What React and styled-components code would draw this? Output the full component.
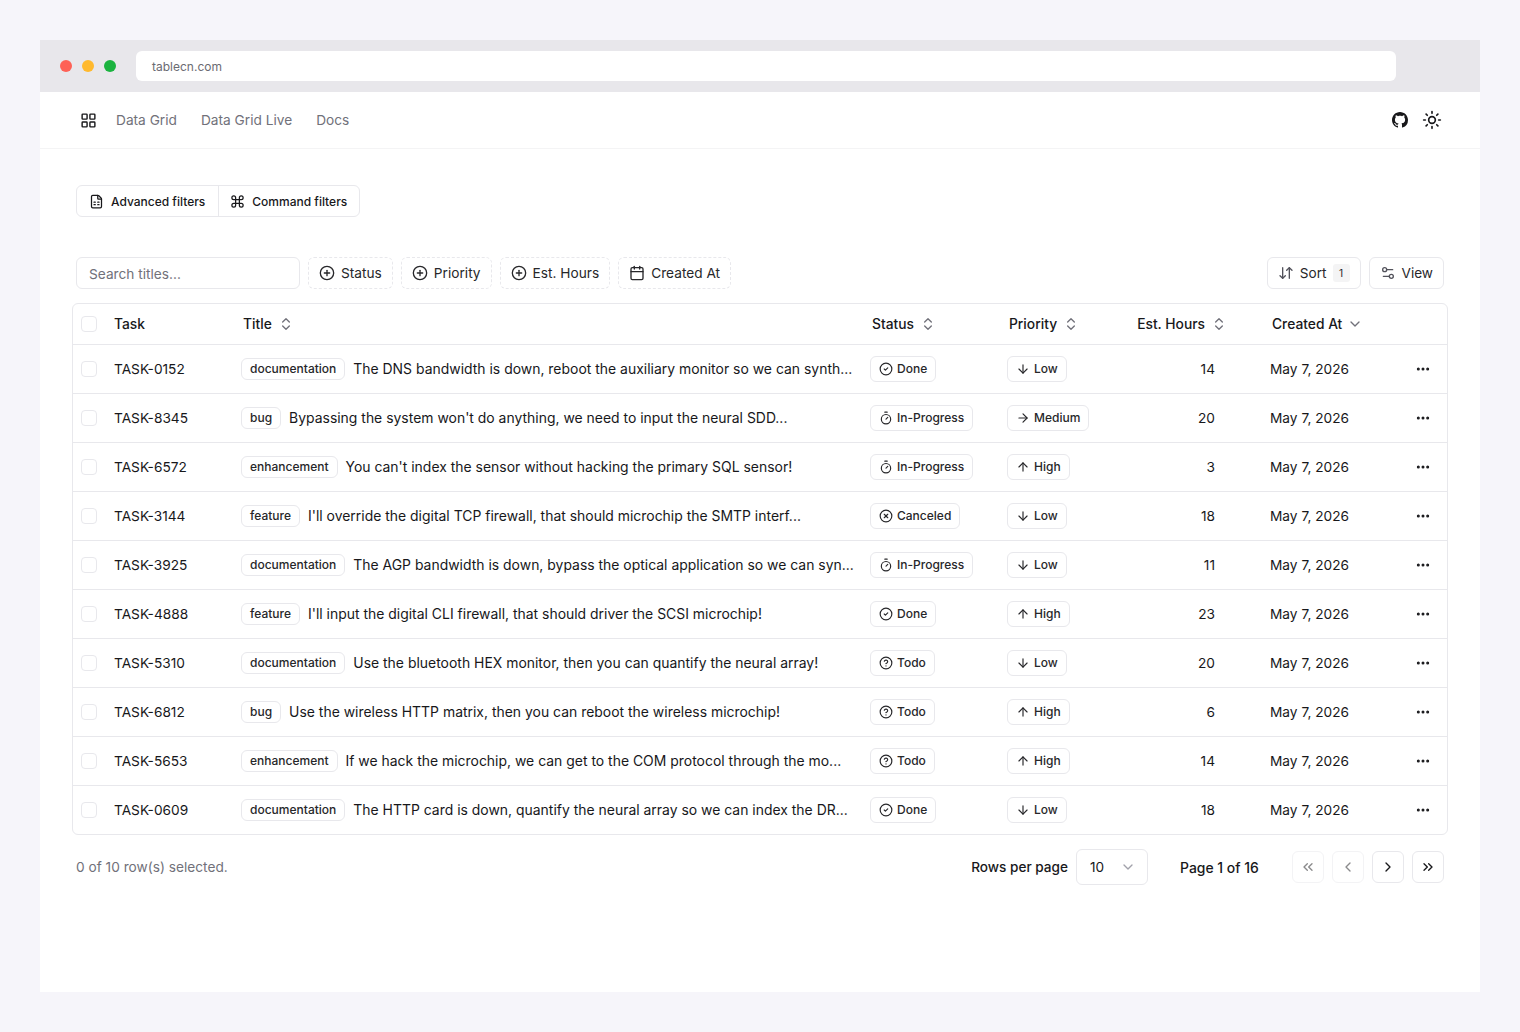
import React from 'react'
import styled, { createGlobalStyle } from 'styled-components'
import {
  ArrowDown, ArrowDownUp, ArrowRight, ArrowUp, Calendar, ChevronDown, ChevronLeft, ChevronRight,
  ChevronsLeft, ChevronsRight, ChevronsUpDown, CircleCheck, CircleHelp, CirclePlus, CircleX, Command,
  Ellipsis, FileSpreadsheet, LayoutGrid, Settings2, Sun, Timer,
} from 'lucide-react'
import { BsGithub } from 'react-icons/bs'

const line = '#e8e8ec'

const Global = createGlobalStyle`
  html, body { margin: 0; padding: 0; background: #f6f5fa; }
  body { font-family: Inter, "Liberation Sans", sans-serif; font-size: 13.7px; color: #18181b; -webkit-font-smoothing: antialiased; }
  * { box-sizing: border-box; }
`

const Page = styled.div`
  height: 1032px;
  padding: 40px;
  overflow: hidden;
`

const Browser = styled.div`
  height: 952px;
  background: #fff;
  display: flex;
  flex-direction: column;
`

const TitleBar = styled.div`
  height: 52px;
  background: #e8e7eb;
  display: flex;
  align-items: center;
  padding: 0 84px 0 20px;
`

const Dot = styled.span`
  width: 12px;
  height: 12px;
  border-radius: 50%;
  margin-right: 10px;
  background: ${p => p.$color};
`

const UrlBar = styled.div`
  flex: 1;
  height: 30px;
  margin-left: 10px;
  padding-left: 16px;
  background: #fff;
  border-radius: 6px;
  display: flex;
  align-items: center;
  font-size: 12px;
  color: #6b6b72;
`

const Nav = styled.nav`
  height: 57px;
  flex: none;
  padding: 0 32px 0 39.5px;
  display: flex;
  align-items: center;
  gap: 24px;
  border-bottom: 1px solid #f4f4f5;
`

const Logo = styled.span`
  display: flex;
  margin-right: -4.5px;
`

const NavLink = styled.a`
  color: #71717a;
  font-size: 13.7px;
`

const NavIcons = styled.div`
  margin-left: auto;
  display: flex;
`

const IconButton = styled.span`
  width: 32px;
  height: 32px;
  display: flex;
  align-items: center;
  justify-content: center;
  color: #18181b;
`

const Content = styled.main`
  padding: 36px 36px 0;
`

const ModeGroup = styled.div`
  display: inline-flex;
  height: 32px;
  border: 1px solid ${line};
  border-radius: 6px;
  vertical-align: top;
`

const ModeButton = styled.div`
  display: flex;
  align-items: center;
  gap: 7px;
  padding: 0 ${p => p.$last ? 12 : 13}px 0 ${p => p.$last ? 11 : 12}px;
  font-size: 12px;
  font-weight: 500;
  & + & { border-left: 1px solid ${line}; }
`

const Toolbar = styled.div`
  margin-top: 40px;
  display: flex;
  gap: 8px;
`

const Search = styled.div`
  width: 224px;
  height: 32px;
  padding: 1px 12px 0;
  display: flex;
  align-items: center;
  border: 1px solid ${line};
  border-radius: 6px;
  color: #71717a;
`

const FilterButton = styled.div`
  height: 32px;
  padding: 0 10px;
  display: flex;
  align-items: center;
  gap: 6px;
  border: 1px dashed ${line};
  border-radius: 6px;
  font-size: 13.7px;
  color: #27272a;
`

const ToolbarEnd = styled.div`
  margin-left: auto;
  display: flex;
  gap: 8px;
`

const OutlineButton = styled.div`
  height: 32px;
  padding: 0 10px;
  display: flex;
  align-items: center;
  gap: 6px;
  border: 1px solid ${line};
  border-radius: 6px;
  font-size: 13.6px;
  color: #27272a;
  svg { color: #52525b; }
`

const Count = styled.span`
  width: 17px;
  height: 18px;
  display: flex;
  align-items: center;
  justify-content: center;
  background: #f4f4f5;
  border-radius: 3px;
  font-size: 10px;
`

const Table = styled.div`
  margin: 14px -4px 0;
  border: 1px solid ${line};
  border-radius: 6px;
`

const Row = styled.div`
  height: ${p => p.$head ? 40 : 49}px;
  padding-left: 8px;
  display: grid;
  grid-template-columns: 33px 127px 629px 137px 140px 123px 142px 1fr;
  align-items: center;
  border-top: ${p => p.$head ? 'none' : `1px solid ${line}`};
  ${p => p.$head && 'font-weight: 500; font-size: 13.8px;'}
`

const Checkbox = styled.span`
  display: block;
  width: 16px;
  height: 16px;
  border: 1px solid ${line};
  border-radius: 4px;
`

const HeadCell = styled.div`
  display: flex;
  align-items: center;
  gap: ${p => p.$gap || 6}px;
  padding-left: 2px;
  svg { color: #71717a; }
`

const HoursHead = styled(HeadCell)`
  justify-content: flex-end;
  padding-right: 43px;
  margin-left: -20px;
`

const TitleCell = styled.div`
  display: flex;
  align-items: center;
  gap: 8px;
  white-space: nowrap;
  font-size: 13.95px;
`

const TitleText = styled.span`
  margin-bottom: 2px;
`

const Tag = styled.span`
  height: 22px;
  padding: 0 8px 1px;
  display: inline-flex;
  align-items: center;
  border: 1px solid ${line};
  border-radius: 6px;
  font-size: 12px;
  font-weight: 500;
  color: #27272a;
`

const Badge = styled.span`
  justify-self: start;
  height: 26px;
  padding: 0 8px 1px;
  display: inline-flex;
  align-items: center;
  gap: 4px;
  border: 1px solid ${line};
  border-radius: 6px;
  font-size: 12px;
  font-weight: 500;
  color: #27272a;
`

const Hours = styled.div`
  text-align: right;
  padding-right: 55px;
`

const RowMenu = styled.div`
  display: flex;
  padding-left: 3px;
`

const Footer = styled.div`
  margin-top: 14px;
  height: 36px;
  display: flex;
  align-items: center;
`

const Selected = styled.div`
  color: #71717a;
`

const Pager = styled.div`
  margin-left: auto;
  display: flex;
  align-items: center;
  font-weight: 500;
  font-size: 13.6px;
`

const PageLabel = styled.span`
  min-width: 80px;
  font-size: 13.95px;
`

const RowsSelect = styled.div`
  width: 72px;
  height: 36px;
  margin: 0 32px 0 8px;
  padding: 0 11px 0 13px;
  display: flex;
  align-items: center;
  justify-content: space-between;
  border: 1px solid ${line};
  border-radius: 6px;
  font-weight: 400;
  svg { color: #a1a1aa; }
`

const PageButtons = styled.div`
  margin-left: 32px;
  display: flex;
  gap: 8px;
`

const PageButton = styled.span`
  width: 32px;
  height: 32px;
  display: flex;
  align-items: center;
  justify-content: center;
  border: 1px solid ${line};
  border-radius: 6px;
  opacity: ${p => p.$disabled ? 0.5 : 1};
`

const statuses = {
  Done: CircleCheck,
  'In-Progress': Timer,
  Canceled: CircleX,
  Todo: CircleHelp,
}

const priorities = {
  Low: ArrowDown,
  Medium: ArrowRight,
  High: ArrowUp,
}

const tasks = [
  ['TASK-0152', 'documentation', 'The DNS bandwidth is down, reboot the auxiliary monitor so we can synth...', 'Done', 'Low', 14],
  ['TASK-8345', 'bug', "Bypassing the system won't do anything, we need to input the neural SDD...", 'In-Progress', 'Medium', 20],
  ['TASK-6572', 'enhancement', "You can't index the sensor without hacking the primary SQL sensor!", 'In-Progress', 'High', 3],
  ['TASK-3144', 'feature', "I'll override the digital TCP firewall, that should microchip the SMTP interf...", 'Canceled', 'Low', 18],
  ['TASK-3925', 'documentation', 'The AGP bandwidth is down, bypass the optical application so we can syn...', 'In-Progress', 'Low', 11],
  ['TASK-4888', 'feature', "I'll input the digital CLI firewall, that should driver the SCSI microchip!", 'Done', 'High', 23],
  ['TASK-5310', 'documentation', 'Use the bluetooth HEX monitor, then you can quantify the neural array!', 'Todo', 'Low', 20],
  ['TASK-6812', 'bug', 'Use the wireless HTTP matrix, then you can reboot the wireless microchip!', 'Todo', 'High', 6],
  ['TASK-5653', 'enhancement', 'If we hack the microchip, we can get to the COM protocol through the mo...', 'Todo', 'High', 14],
  ['TASK-0609', 'documentation', 'The HTTP card is down, quantify the neural array so we can index the DR...', 'Done', 'Low', 18],
]

function TaskRow({ id, tag, title, status, priority, hours }) {
  const StatusIcon = statuses[status]
  const PriorityIcon = priorities[priority]
  return (
    <Row>
      <Checkbox />
      <div>{id}</div>
      <TitleCell>
        <Tag>{tag}</Tag>
        <TitleText>{title}</TitleText>
      </TitleCell>
      <Badge><StatusIcon size={14} />{status}</Badge>
      <Badge><PriorityIcon size={14} />{priority}</Badge>
      <Hours>{hours}</Hours>
      <div>May 7, 2026</div>
      <RowMenu><Ellipsis size={16} strokeWidth={2.5} /></RowMenu>
    </Row>
  )
}

export default function App() {
  return (
    <Page>
      <Global />
      <Browser>
        <TitleBar>
          <Dot $color="#fe6156" />
          <Dot $color="#ffb92e" />
          <Dot $color="#1bb33f" />
          <UrlBar>tablecn.com</UrlBar>
        </TitleBar>
        <Nav>
          <Logo><LayoutGrid size={17} /></Logo>
          <NavLink>Data Grid</NavLink>
          <NavLink>Data Grid Live</NavLink>
          <NavLink>Docs</NavLink>
          <NavIcons>
            <IconButton><BsGithub size={16} /></IconButton>
            <IconButton><Sun size={20} /></IconButton>
          </NavIcons>
        </Nav>
        <Content>
          <ModeGroup>
            <ModeButton><FileSpreadsheet size={15} />Advanced filters</ModeButton>
            <ModeButton $last><Command size={15} />Command filters</ModeButton>
          </ModeGroup>
          <Toolbar>
            <Search>Search titles...</Search>
            <FilterButton><CirclePlus size={16} />Status</FilterButton>
            <FilterButton><CirclePlus size={16} />Priority</FilterButton>
            <FilterButton><CirclePlus size={16} />Est. Hours</FilterButton>
            <FilterButton><Calendar size={16} />Created At</FilterButton>
            <ToolbarEnd>
              <OutlineButton><ArrowDownUp size={16} />Sort<Count>1</Count></OutlineButton>
              <OutlineButton><Settings2 size={16} />View</OutlineButton>
            </ToolbarEnd>
          </Toolbar>
          <Table>
            <Row $head>
              <Checkbox />
              <div>Task</div>
              <HeadCell>Title<ChevronsUpDown size={16} /></HeadCell>
              <HeadCell>Status<ChevronsUpDown size={16} /></HeadCell>
              <HeadCell>Priority<ChevronsUpDown size={16} /></HeadCell>
              <HoursHead>Est. Hours<ChevronsUpDown size={16} /></HoursHead>
              <HeadCell $gap={5}>Created At<ChevronDown size={16} /></HeadCell>
              <div />
            </Row>
            {tasks.map(([id, tag, title, status, priority, hours]) => (
              <TaskRow key={id} id={id} tag={tag} title={title} status={status} priority={priority} hours={hours} />
            ))}
          </Table>
          <Footer>
            <Selected>0 of 10 row(s) selected.</Selected>
            <Pager>
              Rows per page
              <RowsSelect>10<ChevronDown size={16} /></RowsSelect>
              <PageLabel>Page 1 of 16</PageLabel>
              <PageButtons>
                <PageButton $disabled><ChevronsLeft size={16} /></PageButton>
                <PageButton $disabled><ChevronLeft size={16} /></PageButton>
                <PageButton><ChevronRight size={16} /></PageButton>
                <PageButton><ChevronsRight size={16} /></PageButton>
              </PageButtons>
            </Pager>
          </Footer>
        </Content>
      </Browser>
    </Page>
  )
}
